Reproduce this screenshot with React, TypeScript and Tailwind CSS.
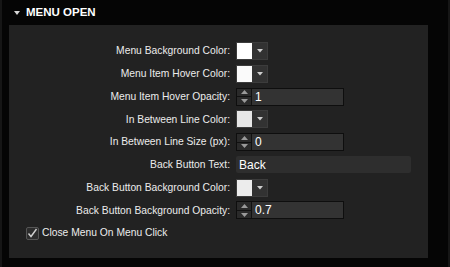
import React from "react";

type Row =
  | { kind: "color"; label: string; swatch: string }
  | { kind: "number"; label: string; value: string }
  | { kind: "text"; label: string; value: string };

const rows: Row[] = [
  { kind: "color", label: "Menu Background Color:", swatch: "#ffffff" },
  { kind: "color", label: "Menu Item Hover Color:", swatch: "#fafafa" },
  { kind: "number", label: "Menu Item Hover Opacity:", value: "1" },
  { kind: "color", label: "In Between Line Color:", swatch: "#e6e6e6" },
  { kind: "number", label: "In Between Line Size (px):", value: "0" },
  { kind: "text", label: "Back Button Text:", value: "Back" },
  { kind: "color", label: "Back Button Background Color:", swatch: "#ececec" },
  { kind: "number", label: "Back Button Background Opacity:", value: "0.7" },
];

function ColorPicker({ swatch }: { swatch: string }) {
  return (
    <div className="flex h-[18px] w-[32px] border border-[#3c3c3c] bg-[#323232]">
      <div className="h-full w-[15px]" style={{ background: swatch }} />
      <div className="flex flex-1 items-center justify-center">
        <svg width="6" height="4" viewBox="0 0 6 4">
          <path d="M0 0h6L3 3.5z" fill="#cfcfcf" />
        </svg>
      </div>
    </div>
  );
}

function NumberInput({ value }: { value: string }) {
  return (
    <div className="flex h-[18px] w-[108px] border border-[#0e0e0e] bg-[#333333]">
      <div className="flex w-[15px] flex-col border-r border-[#111] bg-[#2a2a2a]">
        <div className="flex flex-1 items-center justify-center border-b border-[#111]">
          <svg width="7" height="4" viewBox="0 0 7 4">
            <path d="M0 4h7L3.5 0z" fill="#9a9a9a" />
          </svg>
        </div>
        <div className="flex flex-1 items-center justify-center">
          <svg width="7" height="4" viewBox="0 0 7 4">
            <path d="M0 0h7L3.5 4z" fill="#9a9a9a" />
          </svg>
        </div>
      </div>
      <div className="flex items-center pl-[3px] text-[12px] text-white">{value}</div>
    </div>
  );
}

function TextInput({ value }: { value: string }) {
  return (
    <div className="flex h-[17px] w-[175px] items-center rounded-[2px] bg-[#2e2e2e] pl-[3px] text-[12px] text-white">
      {value}
    </div>
  );
}

export default function App() {
  return (
    <div
      className="flex h-[267px] w-[450px] flex-col border-x-2 border-[#161616] bg-[#050505] text-[#ececec]"
      style={{ fontFamily: '"Liberation Sans", Arial, sans-serif' }}
    >
      {/* header */}
      <div className="flex h-[25px] items-center gap-[6px] pl-[12px]">
        <svg width="6" height="4" viewBox="0 0 6 4">
          <path d="M0 0h6L3 4z" fill="#d8d8d8" />
        </svg>
        <span className="text-[11.5px] font-bold text-white">MENU OPEN</span>
      </div>

      {/* panel */}
      <div className="ml-[7px] mr-[20px] h-[233px] bg-[#222222] pt-[17px]">
        <div className="flex flex-col gap-[4.75px]">
          {rows.map((r) => (
            <div key={r.label} className="flex h-[18px] items-center">
              <div className="w-[222px] pr-[1px] text-right text-[10.3px]">{r.label}</div>
              <div className="ml-[5px]">
                {r.kind === "color" && <ColorPicker swatch={r.swatch} />}
                {r.kind === "number" && <NumberInput value={r.value} />}
                {r.kind === "text" && <TextInput value={r.value} />}
              </div>
            </div>
          ))}
          <div className="flex h-[18px] items-center pl-[17px]">
            <div className="flex h-[13px] w-[13px] items-center justify-center rounded-[2px] border border-[#555] bg-[#2c2c2c]">
              <svg width="11" height="10" viewBox="0 0 11 10">
                <path d="M1.5 5.5L4 8.5L9.5 1" stroke="#d0d0d0" strokeWidth="1.4" fill="none" />
              </svg>
            </div>
            <span className="ml-[3px] text-[10.3px]">Close Menu On Menu Click</span>
          </div>
        </div>
      </div>
    </div>
  );
}
